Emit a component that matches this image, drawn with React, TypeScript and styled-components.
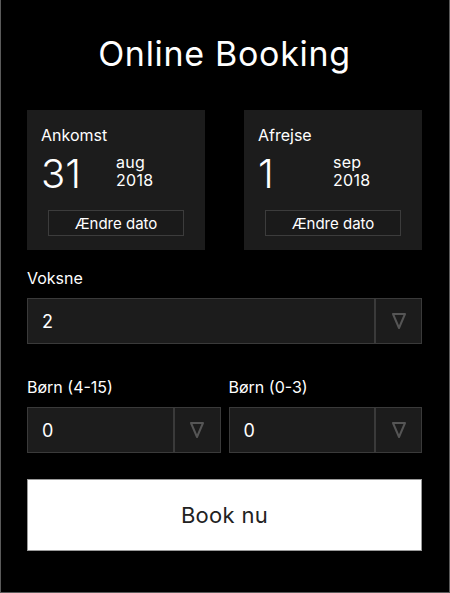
import React from "react";
import styled, { createGlobalStyle } from "styled-components";

const GlobalStyle = createGlobalStyle`
	html, body {
		margin: 0;
		padding: 0;
		background: #000;
	}
	* {
		box-sizing: border-box;
	}
`;

const Page = styled.div`
	width: 450px;
	height: 593px;
	background: #000;
	border: 1px solid #5a5a5a;
	border-top: none;
	padding: 0 27px 0 26px;
	font-family: Inter, "Open Sans", sans-serif;
	color: #fff;
	display: flex;
	flex-direction: column;
`;

const Title = styled.h1`
	margin: 0;
	height: 110px;
	padding-bottom: 4px;
	display: flex;
	align-items: center;
	justify-content: center;
	font-size: 34px;
	font-weight: 400;
	letter-spacing: 0.7px;
`;

const Dates = styled.div`
	display: grid;
	grid-template-columns: 178px 178px;
	justify-content: space-between;
`;

const DateCard = styled.div`
	height: 140px;
	background: #1c1c1c;
	padding: 14px 14px 0 14px;
	display: flex;
	flex-direction: column;
`;

const CardLabel = styled.div`
	font-size: 16px;
	line-height: 22px;
`;

const DateRow = styled.div`
	display: flex;
	margin-top: 8px;
	height: 40px;
`;

const Day = styled.div`
	width: 75px;
	font-size: 40px;
	line-height: 40px;
	font-weight: 300;
`;

const MonthYear = styled.div`
	display: flex;
	flex-direction: column;
	gap: 1px;
	font-size: 16px;
	line-height: 17px;
	letter-spacing: 0.3px;
`;

const ChangeButton = styled.button`
	align-self: center;
	margin-top: 16px;
	width: 136px;
	height: 26px;
	background: #1a1a1a;
	border: 1px solid #3c3c3c;
	color: #fff;
	font-family: inherit;
	font-size: 15px;
	padding: 0;
`;

const Field = styled.div`
	display: flex;
	flex-direction: column;
`;

const FieldLabel = styled.label`
	font-size: 16px;
	line-height: 22px;
	margin-bottom: 9px;
`;

const Select = styled.div`
	height: 46px;
	display: flex;
	background: #1c1c1c;
	border: 1px solid #3a3a3a;
`;

const SelectValue = styled.div`
	flex: 1;
	display: flex;
	align-items: center;
	padding-left: 14px;
	font-size: 18px;
`;

const SelectArrow = styled.div`
	width: 47px;
	border-left: 2px solid #3a3a3a;
	display: flex;
	align-items: center;
	justify-content: center;
`;

const TopField = styled(Field)`
	margin-top: 17px;
`;

const KidsRow = styled.div`
	display: grid;
	grid-template-columns: 1fr 1fr;
	gap: 8px;
	margin-top: 32px;
`;

const BookButton = styled.button`
	margin-top: 26px;
	height: 72px;
	background: #fff;
	border: 1px solid #9a9a9a;
	color: #222;
	font-family: inherit;
	font-size: 22px;
	letter-spacing: 0.3px;
	padding: 0;
`;

const Arrow = () => (
	<svg width="16" height="18" viewBox="0 0 16 18">
		<path d="M2 2 L14 2 L8 16 Z" fill="none" stroke="#555" strokeWidth="2" strokeLinejoin="round" />
	</svg>
);

const DateBox = ({ label, day, month, year }: { label: string; day: string; month: string; year: string }) => (
	<DateCard>
		<CardLabel>{label}</CardLabel>
		<DateRow>
			<Day>{day}</Day>
			<MonthYear>
				<span>{month}</span>
				<span>{year}</span>
			</MonthYear>
		</DateRow>
		<ChangeButton>Ændre dato</ChangeButton>
	</DateCard>
);

const Dropdown = ({ value }: { value: string }) => (
	<Select>
		<SelectValue>{value}</SelectValue>
		<SelectArrow>
			<Arrow />
		</SelectArrow>
	</Select>
);

export default function App() {
	return (
		<>
			<GlobalStyle />
			<Page>
				<Title>Online Booking</Title>
				<Dates>
					<DateBox label="Ankomst" day="31" month="aug" year="2018" />
					<DateBox label="Afrejse" day="1" month="sep" year="2018" />
				</Dates>
				<TopField>
					<FieldLabel>Voksne</FieldLabel>
					<Dropdown value="2" />
				</TopField>
				<KidsRow>
					<Field>
						<FieldLabel>Børn (4-15)</FieldLabel>
						<Dropdown value="0" />
					</Field>
					<Field>
						<FieldLabel>Børn (0-3)</FieldLabel>
						<Dropdown value="0" />
					</Field>
				</KidsRow>
				<BookButton>Book nu</BookButton>
			</Page>
		</>
	);
}
